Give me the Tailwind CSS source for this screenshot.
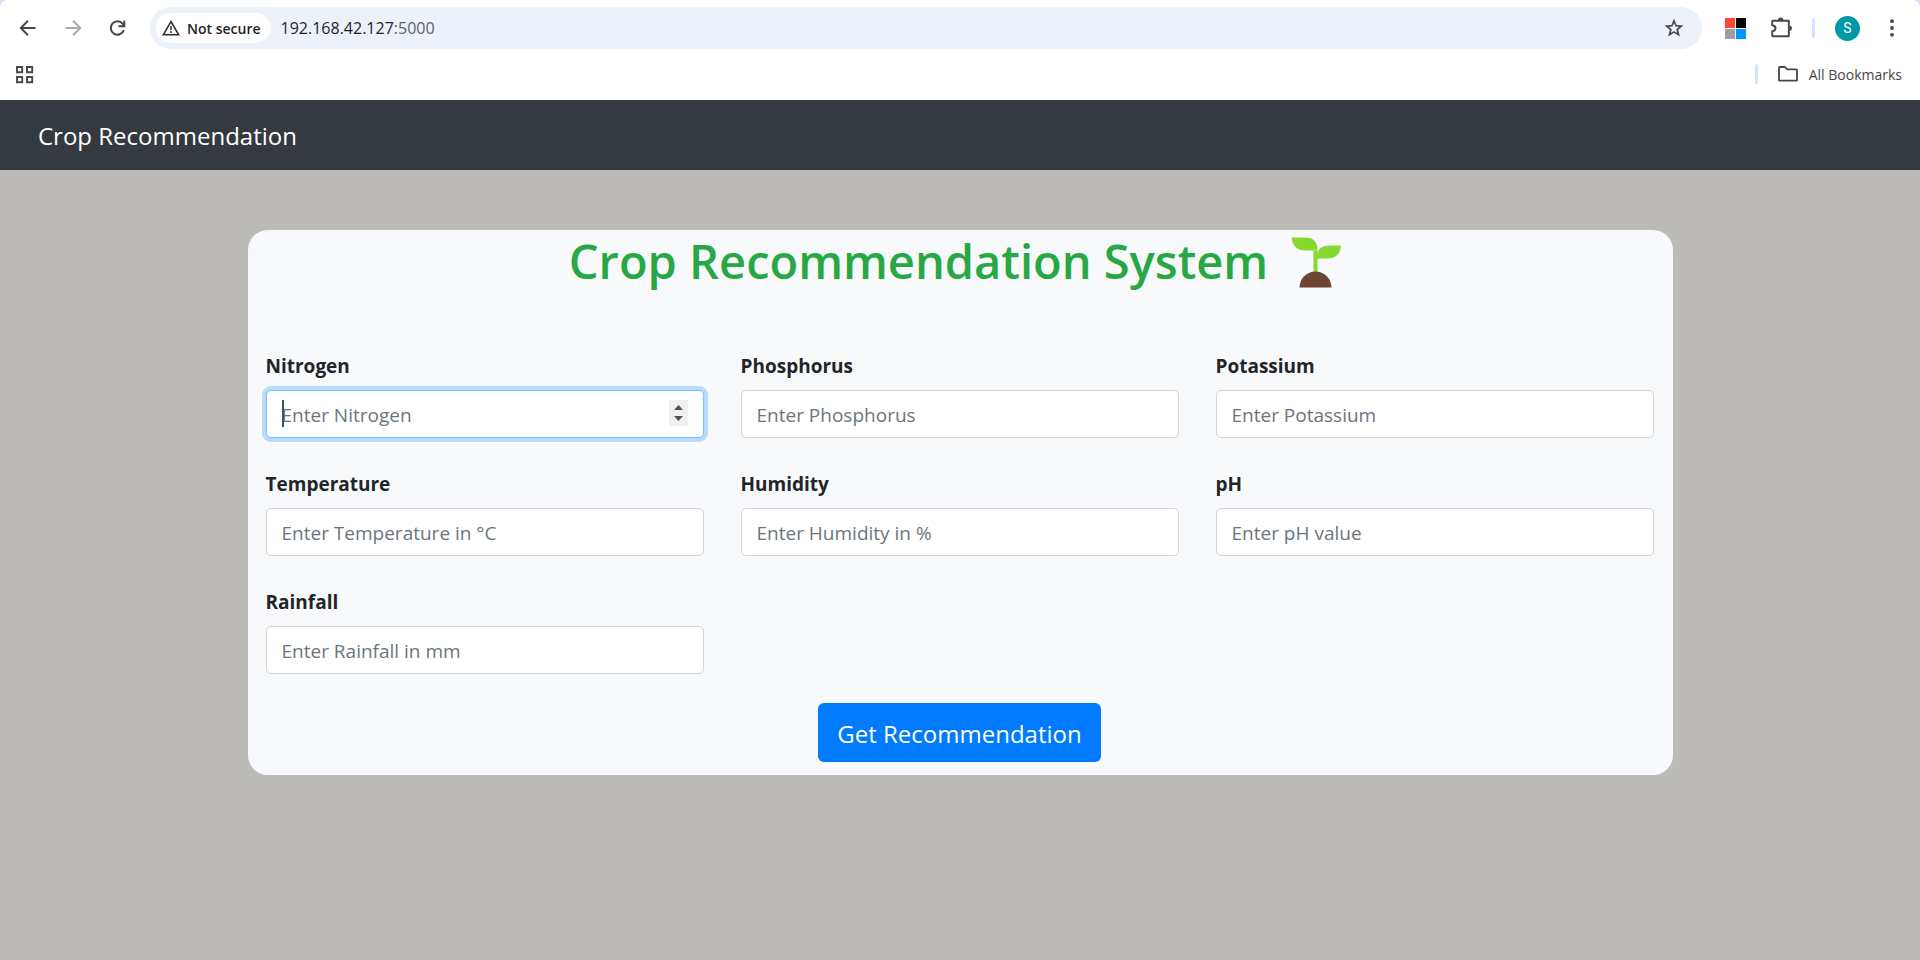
<!DOCTYPE html>
<html lang="en">
<head>
<meta charset="utf-8">
<title>Crop Recommendation</title>
<script src="https://cdn.jsdelivr.net/npm/@tailwindcss/browser@4"></script>
</head>
<body class="flex min-h-screen flex-col bg-[#bcbbb7] font-['Open_Sans','Noto_Sans',sans-serif] text-[#212529]">

<!-- Browser toolbar -->
<header class="bg-[#d3e3fd]">
  <div class="rounded-t-lg bg-white text-[#474747]">
    <div class="flex h-14 items-center pr-4 pl-4">
      <div class="flex items-center gap-[21px]">
        <button type="button" aria-label="Back" class="size-6">
          <svg class="size-6" viewBox="0 0 24 24" fill="none" stroke="#474747" stroke-width="2"><path d="M19.500 12H5.500M12 4.800L4.800 12L12 19.200"/></svg>
        </button>
        <button type="button" aria-label="Forward" class="size-6">
          <svg class="size-6" viewBox="0 0 24 24" fill="none" stroke="#ababab" stroke-width="2"><path d="M4.500 12H18.500M12 4.800L19.200 12L12 19.200"/></svg>
        </button>
        <button type="button" aria-label="Reload" class="size-6">
          <svg class="size-6" viewBox="0 0 24 24" fill="none" stroke="#474747" stroke-width="2"><path d="M17.800 14.200A6.700 6.700 0 1 1 16.700 7.800L18.500 10"/><path d="M18.300 4.500V10.300H12.500"/></svg>
        </button>
      </div>
      <div class="ml-5 flex h-[42px] flex-1 items-center rounded-full bg-[#ecf1fa] pr-[18px] pl-[6px]">
        <button type="button" class="flex h-[30px] items-center gap-[6px] rounded-full bg-white pr-[10px] pl-[5px] text-[14px] font-semibold text-[#1f1f1f]">
          <svg class="size-5" viewBox="0 0 20 20" fill="none" stroke="#303030" stroke-width="1.600"><path d="M10 3.500L17.600 16.700H2.400Z"/><path d="M10 8.200V12.200M10 13.300V15"/></svg>
          <span>Not secure</span>
        </button>
        <div role="textbox" aria-label="Address" class="ml-[10px] flex-1 text-[16px] leading-[26px] text-[#1f1f1f]">192.168.42.127<span class="text-[#5f6368]">:5000</span></div>
        <button type="button" aria-label="Bookmark this page" class="size-5">
          <svg class="size-5" viewBox="0 0 20 20" fill="none" stroke="#474747" stroke-width="1.700"><path d="M10 2.800L12 7.700L17.300 8.100L13.200 11.500L14.500 16.700L10 13.900L5.500 16.700L6.800 11.500L2.700 8.100L8 7.700Z"/></svg>
        </button>
      </div>
      <div class="ml-[23px] flex items-center">
        <button type="button" aria-label="Extension" class="grid size-[21px] grid-cols-2 gap-px">
          <span class="bg-[#ff4438]"></span><span class="bg-black"></span><span class="bg-[#9f9f9f]"></span><span class="bg-[#0094ff]"></span>
        </button>
        <button type="button" aria-label="Extensions" class="ml-[23px] size-6">
          <svg class="size-6" viewBox="0 0 24 24"><path d="M4 4.700H19.800V20.300H4Q3.200 20.300 3.200 19.500V15.200Q6.500 14.700 6.500 12.200Q6.500 9.700 3.200 9.300V5.500Q3.200 4.700 4 4.700Z" fill="none" stroke="#474747" stroke-width="1.900" stroke-linejoin="round"/><path d="M8.900 4.200a2.700 2.700 0 0 1 5.400 0ZM20.200 9.600a2.700 2.700 0 0 1 0 5.400Z" fill="#474747"/></svg>
        </button>
        <span class="ml-[19px] h-5 w-[3px] rounded-full bg-[#d3e3fd]"></span>
        <button type="button" aria-label="Profile" class="ml-5 flex size-[25px] items-center justify-center rounded-full bg-[#0097a7] font-['Roboto',sans-serif] text-[14px] text-white">S</button>
        <button type="button" aria-label="Menu" class="ml-5 size-6">
          <svg class="size-6" viewBox="0 0 24 24" fill="#474747"><circle cx="12" cy="5.200" r="1.900"/><circle cx="12" cy="12" r="1.900"/><circle cx="12" cy="18.800" r="1.900"/></svg>
        </button>
      </div>
    </div>
    <div class="flex h-11 items-start justify-between pr-[18px] pl-[15px]">
      <button type="button" aria-label="Apps" class="mt-[9px] size-5">
        <svg class="size-5" viewBox="0 0 20 20" fill="none" stroke="#474747" stroke-width="1.900"><path d="M2 2H7.200V7.200H2ZM12 2H17.200V7.200H12ZM2 12H7.200V17.200H2ZM12 12H17.200V17.200H12Z"/></svg>
      </button>
      <div class="flex h-9 items-center">
        <span class="h-5 w-[3px] rounded-full bg-[#d3e3fd]"></span>
        <button type="button" class="ml-[19px] flex items-center gap-[10px] text-[14px]">
          <svg class="h-[18px] w-[22px]" viewBox="0 0 22 18" fill="none" stroke="#474747" stroke-width="1.800" stroke-linejoin="round"><path d="M2.700 2H8L10.200 4.300H19.300Q20 4.300 20 5V15Q20 15.700 19.300 15.700H2.700Q2 15.700 2 15V2.700Q2 2 2.700 2Z"/></svg>
          <span>All Bookmarks</span>
        </button>
      </div>
    </div>
  </div>
</header>

<!-- Site navigation -->
<nav class="flex h-[70px] items-center bg-[#343a40] px-[38px] pt-[2px]">
  <a href="#" class="text-[24px] leading-[36px] text-white">Crop Recommendation</a>
</nav>

<main class="mx-auto mt-[60px] w-full max-w-[1425px] rounded-[20px] bg-[#f8f9fa] pr-[19px] pb-[13px] pl-[18px]">
  <h1 class="flex h-[60px] items-center justify-center gap-[23px] pt-[2px] pr-[7px] text-[47px] leading-[60px] font-semibold text-[#28a745]">
    <span>Crop Recommendation System</span>
    <svg class="mt-[3px] h-[52px] w-[52px]" viewBox="0 0 52 52" role="img" aria-label="Seedling"><path d="M22.500 36V13.500H26.500V36Z" fill="#86d72f"/><path d="M.500 .500H14Q26.500 .500 26.500 13.500H15Q2 13.500 .500 .500ZM25.500 21.500Q25.500 8.500 38 8.500H50Q49 21.500 36 21.500Z" fill="#86d72f"/><path d="M8.500 50.500A16 16 0 0 1 40.500 50.500Z" fill="#6d4534"/></svg>
  </h1>
  <form class="mt-[60px]">
    <div class="grid grid-cols-3 gap-x-[37px] gap-y-[30px]">
      <div>
        <label for="nitrogen" class="mb-[9px] block pt-px text-[19px] leading-[30px] font-bold">Nitrogen</label>
        <div class="relative">
          <input id="nitrogen" type="number" placeholder="Enter Nitrogen" class="block h-12 w-full [appearance:textfield] rounded-[5px] border border-[#80bdff] bg-white px-[15px] pt-[2px] text-[19px] shadow-[0_0_0_4px_#b9dafc] outline-none placeholder:text-[#6c757d]">
          <span class="absolute top-[10px] left-4 h-[27px] w-[2px] bg-[#495057]"></span>
          <svg class="absolute top-[10px] right-4 h-[26px] w-[19px]" viewBox="0 0 19 26"><path d="M0 0H19V26H0Z" fill="#efefef"/><path d="M5 10L9.500 5L14 10ZM5 16H14L9.500 21Z" fill="#505050"/></svg>
        </div>
      </div>
      <div>
        <label for="phosphorus" class="mb-[9px] block pt-px text-[19px] leading-[30px] font-bold">Phosphorus</label>
        <input id="phosphorus" type="number" placeholder="Enter Phosphorus" class="block h-12 w-full [appearance:textfield] rounded-[5px] border border-[#ced4da] bg-white px-[15px] pt-[2px] text-[19px] placeholder:text-[#6c757d]">
      </div>
      <div>
        <label for="potassium" class="mb-[9px] block pt-px text-[19px] leading-[30px] font-bold">Potassium</label>
        <input id="potassium" type="number" placeholder="Enter Potassium" class="block h-12 w-full [appearance:textfield] rounded-[5px] border border-[#ced4da] bg-white px-[15px] pt-[2px] text-[19px] placeholder:text-[#6c757d]">
      </div>
      <div>
        <label for="temperature" class="mb-[9px] block pt-px text-[19px] leading-[30px] font-bold">Temperature</label>
        <input id="temperature" type="number" placeholder="Enter Temperature in °C" class="block h-12 w-full [appearance:textfield] rounded-[5px] border border-[#ced4da] bg-white px-[15px] pt-[2px] text-[19px] placeholder:text-[#6c757d]">
      </div>
      <div>
        <label for="humidity" class="mb-[9px] block pt-px text-[19px] leading-[30px] font-bold">Humidity</label>
        <input id="humidity" type="number" placeholder="Enter Humidity in %" class="block h-12 w-full [appearance:textfield] rounded-[5px] border border-[#ced4da] bg-white px-[15px] pt-[2px] text-[19px] placeholder:text-[#6c757d]">
      </div>
      <div>
        <label for="ph" class="mb-[9px] block pt-px text-[19px] leading-[30px] font-bold">pH</label>
        <input id="ph" type="number" placeholder="Enter pH value" class="block h-12 w-full [appearance:textfield] rounded-[5px] border border-[#ced4da] bg-white px-[15px] pt-[2px] text-[19px] placeholder:text-[#6c757d]">
      </div>
      <div>
        <label for="rainfall" class="mb-[9px] block pt-px text-[19px] leading-[30px] font-bold">Rainfall</label>
        <input id="rainfall" type="number" placeholder="Enter Rainfall in mm" class="block h-12 w-full [appearance:textfield] rounded-[5px] border border-[#ced4da] bg-white px-[15px] pt-[2px] text-[19px] placeholder:text-[#6c757d]">
      </div>
    </div>
    <div class="mt-[29px] flex justify-center">
      <button type="submit" class="h-[59px] rounded-md bg-[#007bff] px-[19px] pt-[2px] text-[24px] text-white">Get Recommendation</button>
    </div>
  </form>
</main>
</body>
</html>
